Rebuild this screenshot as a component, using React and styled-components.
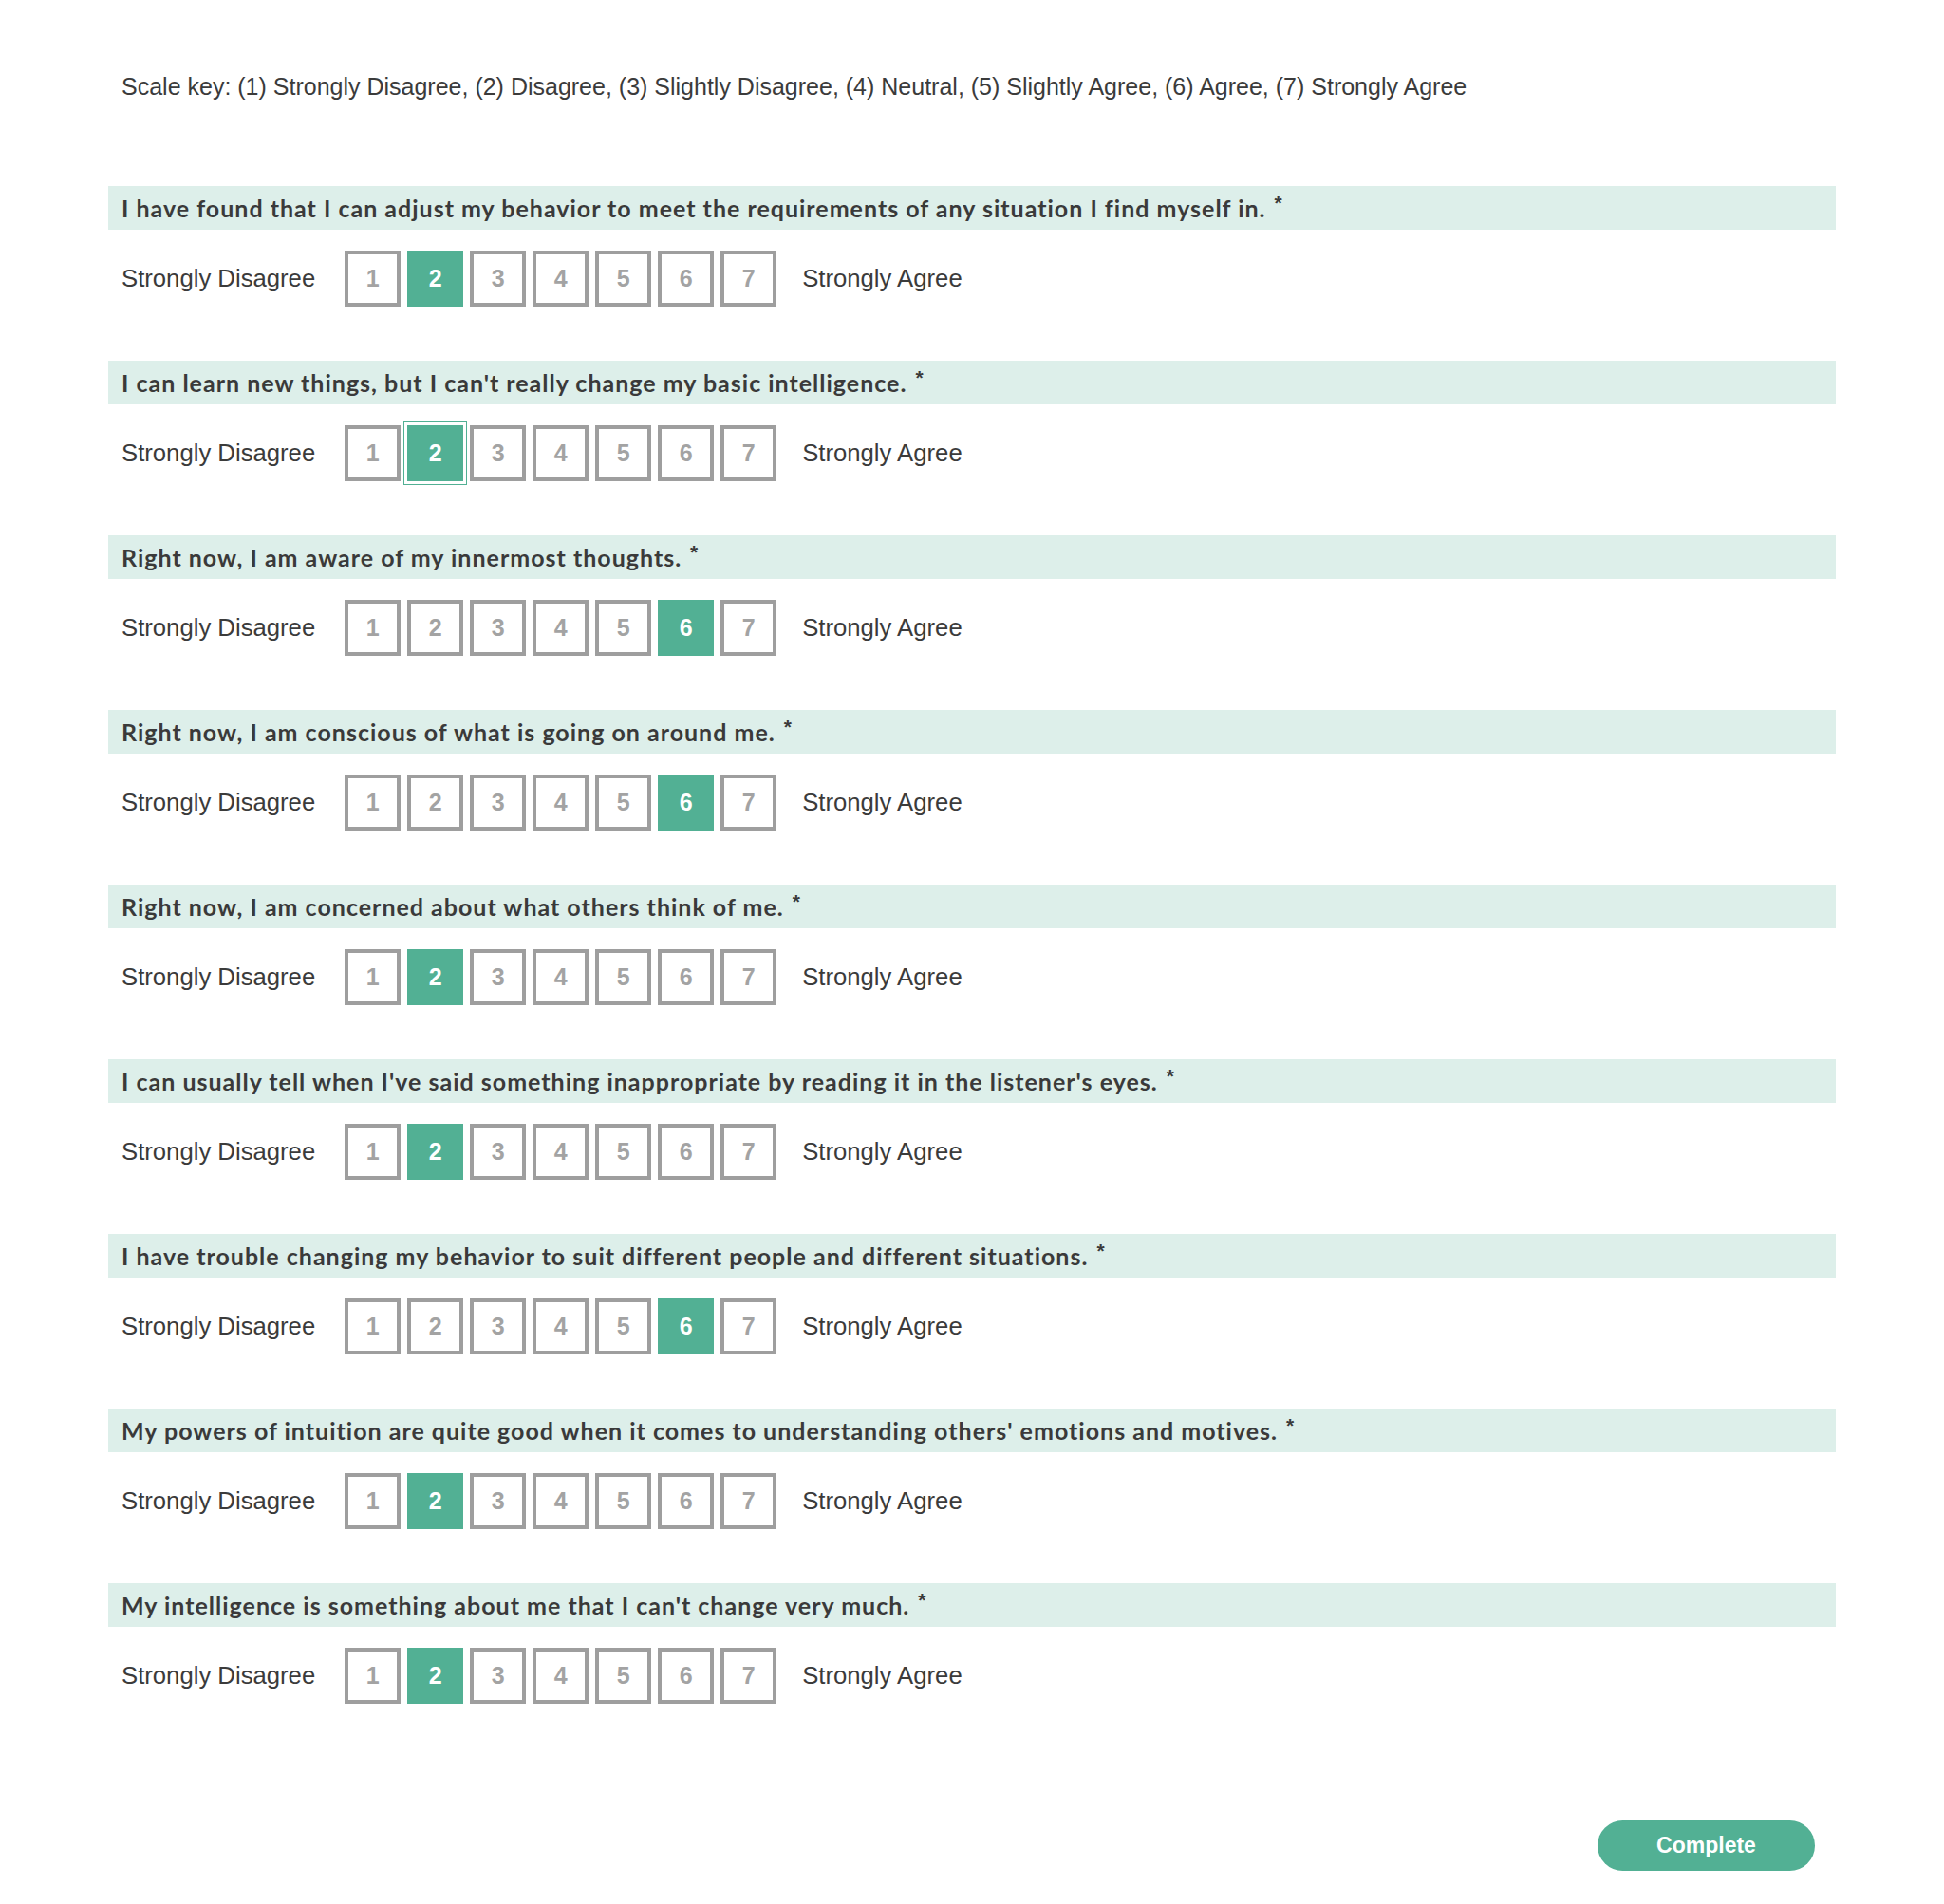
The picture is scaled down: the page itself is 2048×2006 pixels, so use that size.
import React, { useState } from "react";
import styled, { createGlobalStyle, css } from "styled-components";

const GlobalStyle = createGlobalStyle`
  html, body { margin: 0; padding: 0; background: #ffffff; }
  body { font-family: "Liberation Sans", Arial, sans-serif; color: #3b3b3b; }
  * { box-sizing: border-box; }
`;

const Page = styled.div`
  width: 2048px;
  min-height: 2006px;
  padding: 0 114px 35px;
`;

const ScaleKey = styled.p`
  margin: 73px 0 87px;
  padding-left: 14px;
  height: 36px;
  line-height: 36px;
  font-size: 25px;
  color: #3b3b3b;
`;

const QuestionList = styled.div`
  display: flex;
  flex-direction: column;
  gap: 57px;
`;

const QuestionBlock = styled.section`
  display: flex;
  flex-direction: column;
  gap: 22px;
`;

const QuestionBar = styled.div`
  height: 46px;
  display: flex;
  align-items: center;
  padding: 0 14px;
  background: #ddefea;
  font-family: "Lato", "Open Sans", sans-serif;
  font-weight: 700;
  font-size: 25px;
  letter-spacing: 1px;
  color: #3a3a3a;
  white-space: nowrap;
`;

const Required = styled.sup`
  font-family: "Liberation Sans", Arial, sans-serif;
  font-weight: 700;
  font-size: 21px;
  margin-left: 9px;
  position: relative;
  top: -5px;
`;

const RatingRow = styled.div`
  height: 59px;
  display: flex;
  align-items: center;
  padding-left: 14px;
`;

const EndLabel = styled.span`
  font-size: 25.7px;
  color: #3b3b3b;
  margin: ${(p) => (p.$left ? "0 31px 0 0" : "0 0 0 27px")};
`;

const Boxes = styled.div`
  display: flex;
  gap: 7px;
`;

const RateBox = styled.button`
  width: 59px;
  height: 59px;
  padding: 0;
  border: 4px solid #9e9e9e;
  background: #ffffff;
  color: #a3a3a3;
  font-family: "Liberation Sans", Arial, sans-serif;
  font-weight: 700;
  font-size: 25px;
  display: flex;
  align-items: center;
  justify-content: center;
  cursor: pointer;
  outline: none;
  ${(p) =>
    p.$selected &&
    css`
      background: #52b094;
      border-color: #52b094;
      color: #ffffff;
    `}
  ${(p) =>
    p.$focused &&
    css`
      outline: 1px solid #52b094;
      outline-offset: 3px;
    `}
`;

const Footer = styled.div`
  display: flex;
  justify-content: flex-end;
  padding-right: 22px;
  margin-top: 123px;
`;

const CompleteButton = styled.button`
  width: 229px;
  height: 53px;
  border: none;
  border-radius: 27px;
  background: #52b094;
  color: #ffffff;
  font-family: "Liberation Sans", Arial, sans-serif;
  font-weight: 700;
  font-size: 23px;
  cursor: pointer;
`;

const questions = [
  { text: "I have found that I can adjust my behavior to meet the requirements of any situation I find myself in.", value: 2 },
  { text: "I can learn new things, but I can't really change my basic intelligence.", value: 2, focused: true },
  { text: "Right now, I am aware of my innermost thoughts.", value: 6 },
  { text: "Right now, I am conscious of what is going on around me.", value: 6 },
  { text: "Right now, I am concerned about what others think of me.", value: 2 },
  { text: "I can usually tell when I've said something inappropriate by reading it in the listener's eyes.", value: 2 },
  { text: "I have trouble changing my behavior to suit different people and different situations.", value: 6 },
  { text: "My powers of intuition are quite good when it comes to understanding others' emotions and motives.", value: 2 },
  { text: "My intelligence is something about me that I can't change very much.", value: 2 },
];

export default function App() {
  const [values, setValues] = useState(questions.map((q) => q.value));
  const setValue = (qi, v) => setValues((prev) => prev.map((x, i) => (i === qi ? v : x)));

  return (
    <Page>
      <GlobalStyle />
      <ScaleKey>
        Scale key: (1) Strongly Disagree, (2) Disagree, (3) Slightly Disagree, (4) Neutral, (5) Slightly Agree, (6) Agree, (7) Strongly Agree
      </ScaleKey>
      <QuestionList>
        {questions.map((q, qi) => (
          <QuestionBlock key={qi}>
            <QuestionBar>
              {q.text}
              <Required>*</Required>
            </QuestionBar>
            <RatingRow>
              <EndLabel $left>Strongly Disagree</EndLabel>
              <Boxes>
                {[1, 2, 3, 4, 5, 6, 7].map((n) => (
                  <RateBox
                    key={n}
                    type="button"
                    $selected={values[qi] === n}
                    $focused={q.focused && values[qi] === n}
                    onClick={() => setValue(qi, n)}
                  >
                    {n}
                  </RateBox>
                ))}
              </Boxes>
              <EndLabel>Strongly Agree</EndLabel>
            </RatingRow>
          </QuestionBlock>
        ))}
      </QuestionList>
      <Footer>
        <CompleteButton type="button">Complete</CompleteButton>
      </Footer>
    </Page>
  );
}
